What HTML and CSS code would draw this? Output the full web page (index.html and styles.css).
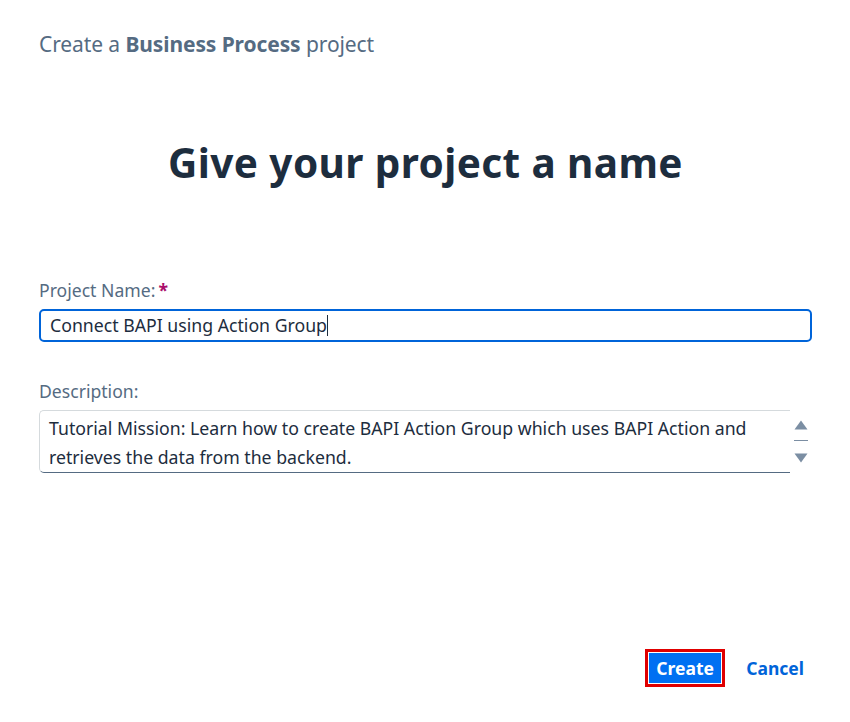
FILE: index.html
```html
<!DOCTYPE html>
<html>
<head>
<meta charset="utf-8">
<link rel="stylesheet" href="styles.css">
</head>
<body>
<div class="page">
  <div class="crumb">Create a <b>Business Process</b> project</div>
  <h1 class="title">Give your project a name</h1>
  <div class="field">
    <label class="label">Project Name:<span class="req">*</span></label>
    <div class="input">Connect BAPI using Action Group<span class="caret"></span></div>
  </div>
  <div class="field field-desc">
    <label class="label">Description:</label>
    <div class="desc-row">
      <div class="textarea">Tutorial Mission: Learn how to create BAPI Action Group which uses BAPI Action and retrieves the data from the backend.</div>
      <div class="scroller">
        <svg width="14" height="10" viewBox="0 0 14 10"><path d="M7 0.5 L13.5 9.5 L0.5 9.5 Z" fill="#7b8ea3"/></svg>
        <span class="sline"></span>
        <svg width="14" height="10" viewBox="0 0 14 10"><path d="M0.5 0.5 L13.5 0.5 L7 9.5 Z" fill="#7b8ea3"/></svg>
      </div>
    </div>
  </div>
  <div class="spacer"></div>
  <div class="actions">
    <div class="create-wrap"><button class="btn-create">Create</button></div>
    <button class="btn-cancel">Cancel</button>
  </div>
</div>
</body>
</html>
```
FILE: styles.css
```css
html, body { margin: 0; padding: 0; background: #fff; }
body { font-family: "Noto Sans", "Open Sans", "Liberation Sans", sans-serif; color: #1d2d3e; }
.page { width: 850px; height: 722px; box-sizing: border-box; padding: 30px 38px 0 39px; display: flex; flex-direction: column; }
.crumb { font-size: 21px; color: #556b82; line-height: 28px; letter-spacing: -0.1px; }
.crumb b { font-weight: 700; }
.title { margin: 77px 0 0 0; text-align: center; font-size: 40.5px; line-height: 56px; font-weight: 700; color: #1d2d3e; letter-spacing: 0.4px; }
.field { margin-top: 88px; display: flex; flex-direction: column; }
.label { font-size: 17.6px; color: #556b82; line-height: 22px; margin-bottom: 8px; }
.req { color: #aa0d6a; font-weight: 700; margin-left: 3px; }
.input { height: 33px; box-sizing: border-box; border: 2px solid #0064d9; border-radius: 5px; padding: 0 9px; font-size: 17.7px; line-height: 29px; color: #1d2d3e; display: flex; align-items: center; }
.caret { display: inline-block; width: 1.5px; height: 21px; background: #1d2d3e; margin-left: 0; }
.field-desc { margin-top: 38px; }
.desc-row { display: flex; align-items: stretch; }
.textarea { width: 751px; height: 63px; box-sizing: border-box; border: 1px solid #d5dadd; border-bottom: 1px solid #556b82; border-right: none; border-radius: 5px 0 0 5px; padding: 3px 9px; font-size: 17.7px; line-height: 29px; color: #1d2d3e; }
.scroller { width: 22px; display: flex; flex-direction: column; align-items: center; padding-top: 10px; margin-left: 0; }
.scroller svg { display: block; }
.sline { width: 14px; height: 1px; background: #7b8ea3; margin: 10px 0 12px; }
.spacer { flex: 1; }
.actions { display: flex; justify-content: flex-end; align-items: center; gap: 21px; margin-bottom: 35px; padding-right: 8px; }
.create-wrap { border: 3px solid #e00000; padding: 1px; }
.btn-create { background: #0070f2; color: #fff; border: none; border-radius: 0; font-family: inherit; font-size: 17.5px; font-weight: 700; width: 72px; height: 30px; padding: 0; }
.btn-cancel { background: none; border: none; color: #0064d9; font-family: inherit; font-size: 17.5px; font-weight: 700; padding: 0 0; }
```
